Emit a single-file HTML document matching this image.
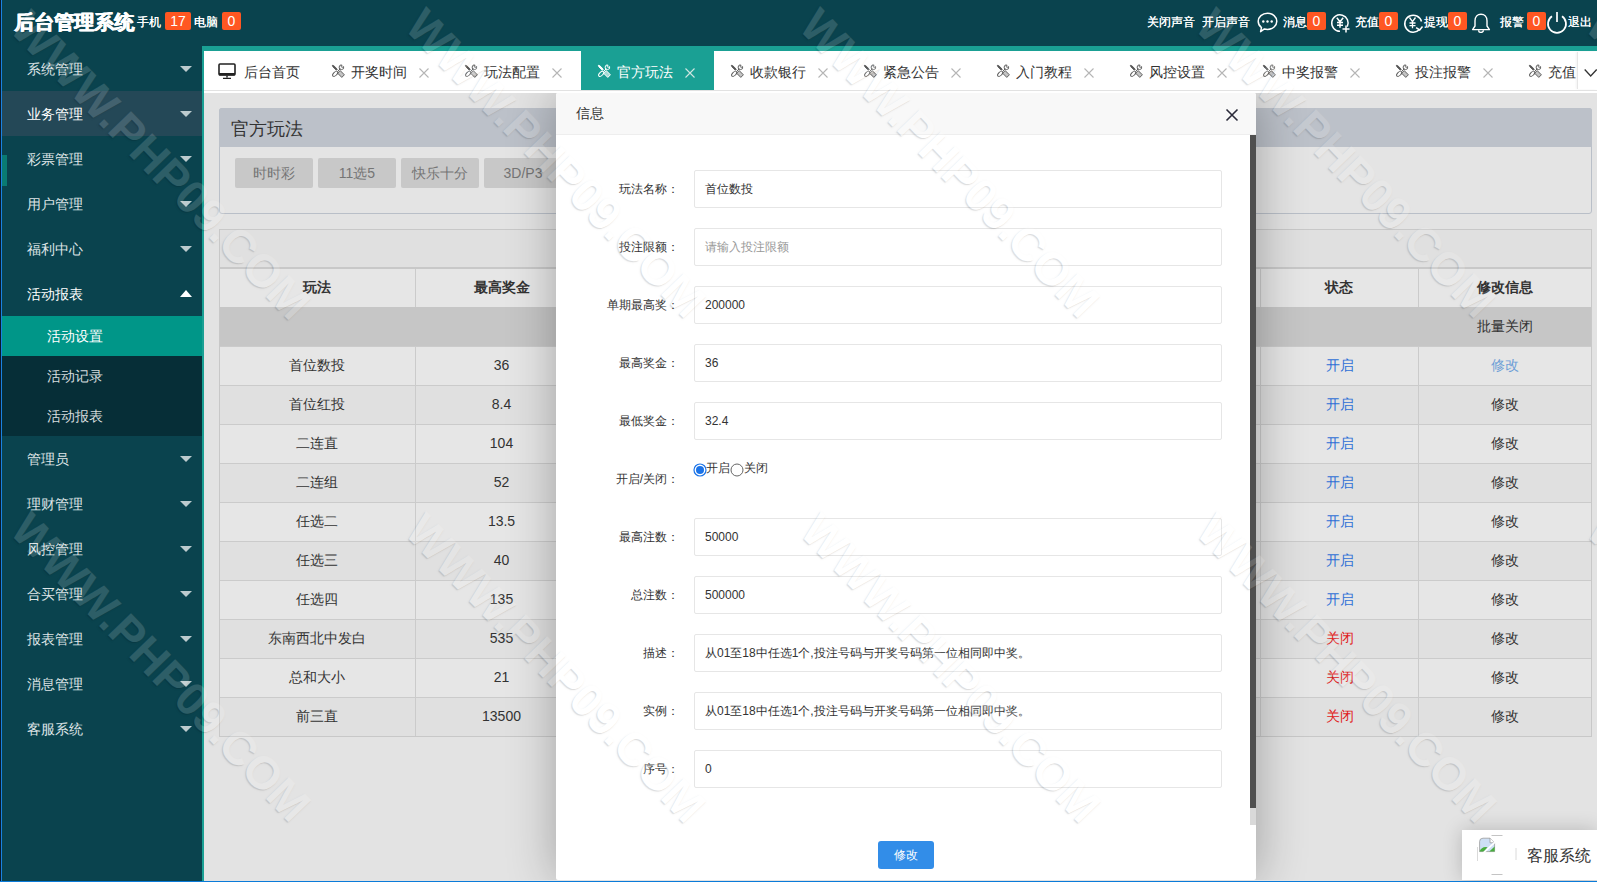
<!DOCTYPE html>
<html><head><meta charset="utf-8">
<style>
*{margin:0;padding:0;box-sizing:border-box}
html,body{width:1597px;height:882px;overflow:hidden}
body{position:relative;font-family:"Liberation Sans",sans-serif;font-size:14px;color:#333;background:#e3e3e3}
.a{position:absolute}
/* header */
#hd{left:0;top:0;width:1597px;height:46px;background:#0a434e}
#title{left:14px;top:9px;font-size:20px;font-weight:bold;text-shadow:0.6px 0 0 #fff,0 0.3px 0 #fff;color:#fff;line-height:26px;white-space:nowrap}
.ht{color:#fff;font-size:12px;line-height:16px;top:14px;white-space:nowrap;text-shadow:0.35px 0 0 #fff}
.bdg{background:#ff5722;color:#fff;height:18px;top:12px;border-radius:2px;font-size:14px;line-height:18px;text-align:center}
/* sidebar */
#sb{left:0;top:46px;width:202px;height:836px;background:#0a434e}
.mi{position:absolute;left:0;width:202px;height:45px;line-height:45px;padding-top:1px;padding-left:27px;color:#dfe5e7;font-size:14px}
.mi .tri{position:absolute;left:180px;top:20px;width:0;height:0;border-left:6px solid transparent;border-right:6px solid transparent;border-top:6px solid #bccbce}
.mi .triu{position:absolute;left:180px;top:19px;width:0;height:0;border-left:6px solid transparent;border-right:6px solid transparent;border-bottom:7px solid #fff}
.si{position:absolute;left:0;width:202px;height:40px;line-height:40px;padding-left:47px;color:#d5dcde;font-size:14px}
/* content */
#frame{left:202px;top:46px;width:1395px;height:836px;background:#1aa094}
#tabs{left:204px;top:51px;width:1393px;height:40px;background:#fff;border-bottom:1px solid #e2e2e2}
.tab{position:absolute;top:0;height:39px;line-height:39px;color:#333;font-size:14px;white-space:nowrap}
.tab.on{background:#1aa094;color:#fff}
.tab svg{position:absolute}
.tab .x{position:absolute;top:15px;width:11px;height:11px}
#content{left:204px;top:91px;width:1393px;height:791px;background:#e3e3e3;border-top:2px solid #fff}
.tc{height:39px;line-height:39px;text-align:center;color:#333;font-size:14px;white-space:nowrap}
.lab{left:556px;width:123px;height:38px;line-height:38px;text-align:right;font-size:12px;color:#333;white-space:nowrap}
.inp{left:694px;width:528px;height:38px;line-height:36px;border:1px solid #e6e6e6;border-radius:2px;padding-left:10px;font-size:12px;white-space:nowrap;overflow:hidden}
.wm{position:absolute;width:440px;height:56px;line-height:56px;text-align:center;font-size:46px;font-weight:bold;color:#fff;text-shadow:0 1.4px 1.2px #000;opacity:.14;transform:rotate(46deg);white-space:nowrap;pointer-events:none}
</style></head><body>
<div class="a" id="hd"></div>
<div class="a" id="title">后台管理系统</div>
<div class="a ht" style="left:137px">手机</div>
<div class="a bdg" style="left:165px;width:26px">17</div>
<div class="a ht" style="left:194px">电脑</div>
<div class="a bdg" style="left:222px;width:19px">0</div>


<div class="a ht" style="left:1147px">关闭声音</div>
<div class="a ht" style="left:1202px">开启声音</div>
<svg class="a" style="left:1256px;top:11px" width="23" height="23" viewBox="0 0 23 23"><path d="M11.5 2.2c5.2 0 9.3 3.6 9.3 8.1s-4.1 8.1-9.3 8.1c-1.1 0-2.1-.15-3.1-.45L4.6 20.6l.9-3.9C3.5 15.2 2.2 12.9 2.2 10.3c0-4.5 4.1-8.1 9.3-8.1z" fill="none" stroke="#fff" stroke-width="1.5" stroke-linejoin="round"/><circle cx="7.3" cy="10.5" r="1.2" fill="#fff"/><circle cx="11.5" cy="10.5" r="1.2" fill="#fff"/><circle cx="15.7" cy="10.5" r="1.2" fill="#fff"/></svg>
<div class="a ht" style="left:1283px">消息</div>
<div class="a bdg" style="left:1307px;width:19px">0</div>
<svg class="a" style="left:1330px;top:12px" width="22" height="22" viewBox="0 0 22 22"><path d="M17.3 14.6A8.2 8.2 0 1 0 10 19.2" fill="none" stroke="#fff" stroke-width="1.5"/><path d="M6.8 5.8l3.2 4 3.2-4M10 9.8v6M7 10.6h6M7 13.2h6" fill="none" stroke="#fff" stroke-width="1.5"/><path d="M16 13.5v7M12.5 17h7" stroke="#fff" stroke-width="1.5"/></svg>
<div class="a ht" style="left:1355px">充值</div>
<div class="a bdg" style="left:1379px;width:19px">0</div>
<svg class="a" style="left:1402px;top:12px" width="23" height="23" viewBox="0 0 23 23"><path d="M19.5 9.5A8.5 8.5 0 1 0 17.5 17.5" fill="none" stroke="#fff" stroke-width="1.5"/><path d="M20.5 14.5l-2.8 3.4-3.6-2.2" fill="none" stroke="#fff" stroke-width="1.5"/><path d="M7.5 5.5l3 4.2 3-4.2M10.5 9.7v6.5M7.5 11h6M7.5 13.6h6" fill="none" stroke="#fff" stroke-width="1.3"/></svg>
<div class="a ht" style="left:1424px">提现</div>
<div class="a bdg" style="left:1448px;width:19px">0</div>
<svg class="a" style="left:1471px;top:13px" width="20" height="20" viewBox="0 0 20 20"><path d="M10 1.2c3.5 0 6 2.8 6 6.6v5.2l2.4 3.6H1.6L4 13V7.8C4 4 6.5 1.2 10 1.2z" fill="none" stroke="#fff" stroke-width="1.4" stroke-linejoin="round"/><path d="M7.6 17.2a2.4 2.2 0 0 0 4.8 0" fill="none" stroke="#fff" stroke-width="1.4"/></svg>
<div class="a ht" style="left:1500px">报警</div>
<div class="a bdg" style="left:1527px;width:19px">0</div>
<svg class="a" style="left:1546px;top:11px" width="22" height="24" viewBox="0 0 22 24"><path d="M6 5.3A9 9 0 1 0 16 5.3" fill="none" stroke="#fff" stroke-width="1.7"/><path d="M11 1v10" stroke="#fff" stroke-width="1.7"/></svg>
<div class="a ht" style="left:1568px">退出</div>

<div class="a" id="sb"></div>
<div class="a" style="left:0;top:356px;width:202px;height:80px;background:#062e37"></div>
<div class="mi" style="top:46px">系统管理<i class="tri"></i></div>
<div class="mi" style="top:91px;background:#244857;color:#fff">业务管理<i class="tri"></i></div>
<div class="mi" style="top:136px">彩票管理<i class="tri"></i></div>
<div class="mi" style="top:181px">用户管理<i class="tri"></i></div>
<div class="mi" style="top:226px">福利中心<i class="tri"></i></div>
<div class="mi" style="top:271px;color:#fff">活动报表<i class="triu"></i></div>
<div class="si" style="top:316px;background:#009688;color:#fff">活动设置</div>
<div class="si" style="top:356px">活动记录</div>
<div class="si" style="top:396px">活动报表</div>
<div class="mi" style="top:436px">管理员<i class="tri"></i></div>
<div class="mi" style="top:481px">理财管理<i class="tri"></i></div>
<div class="mi" style="top:526px">风控管理<i class="tri"></i></div>
<div class="mi" style="top:571px">合买管理<i class="tri"></i></div>
<div class="mi" style="top:616px">报表管理<i class="tri"></i></div>
<div class="mi" style="top:661px">消息管理<i class="tri"></i></div>
<div class="mi" style="top:706px">客服系统<i class="tri"></i></div>
<div class="a" style="left:0;top:0;width:1px;height:882px;background:#0a1a2a"></div><div class="a" style="left:1px;top:0;width:1px;height:882px;background:#1a82e0"></div>
<div class="a" style="left:2px;top:155px;width:5px;height:31px;background:#0a7a72"></div>
<div class="a" id="frame"></div>
<div class="a" id="tabs"></div>
<div class="a" style="left:581px;top:51px;width:133px;height:39px;background:#1aa094"></div>
<svg class="a" style="left:218px;top:63px" width="18" height="17" viewBox="0 0 18 17"><rect x="1" y="1" width="16" height="11" rx="1" fill="none" stroke="#222" stroke-width="1.6"/><rect x="1" y="10" width="16" height="2.4" fill="#222"/><path d="M9 12.4v2.2M5 15.4h8" stroke="#222" stroke-width="1.4"/></svg>
<div class="a" style="left:244px;top:64px;font-size:14px;line-height:17px;color:#333;white-space:nowrap">后台首页</div>
<svg class="a" style="left:331px;top:64px" width="14" height="14" viewBox="0 0 14 14"><g fill="none" stroke="#5a5a5a" stroke-width="0.95"><path d="M1.3 1.3l1.6.5 3.4 3.4-1 1-3.4-3.4z" fill="#555"/><path d="M9.2 6.6l4.2 4.2-2.6 2.6-4.2-4.2z" fill="#555" fill-opacity="0.35"/><path d="M12.6 2.6a2.3 2.3 0 1 1-1.5-1.5l-1 1.4.9.9z"/><path d="M9.3 4.7L7 7"/><ellipse cx="4.2" cy="9.8" rx="3.2" ry="1.7" transform="rotate(-45 4.2 9.8)"/></g></svg>
<div class="a" style="left:351px;top:64px;font-size:14px;line-height:17px;color:#333;white-space:nowrap">开奖时间</div>
<svg class="a" style="left:419px;top:68px" width="10" height="10" viewBox="0 0 10 10"><path d="M0.5 0.5l9 9M9.5 0.5l-9 9" stroke="#b5b5b5" stroke-width="1.1"/></svg>
<svg class="a" style="left:464px;top:64px" width="14" height="14" viewBox="0 0 14 14"><g fill="none" stroke="#5a5a5a" stroke-width="0.95"><path d="M1.3 1.3l1.6.5 3.4 3.4-1 1-3.4-3.4z" fill="#555"/><path d="M9.2 6.6l4.2 4.2-2.6 2.6-4.2-4.2z" fill="#555" fill-opacity="0.35"/><path d="M12.6 2.6a2.3 2.3 0 1 1-1.5-1.5l-1 1.4.9.9z"/><path d="M9.3 4.7L7 7"/><ellipse cx="4.2" cy="9.8" rx="3.2" ry="1.7" transform="rotate(-45 4.2 9.8)"/></g></svg>
<div class="a" style="left:484px;top:64px;font-size:14px;line-height:17px;color:#333;white-space:nowrap">玩法配置</div>
<svg class="a" style="left:552px;top:68px" width="10" height="10" viewBox="0 0 10 10"><path d="M0.5 0.5l9 9M9.5 0.5l-9 9" stroke="#b5b5b5" stroke-width="1.1"/></svg>
<svg class="a" style="left:597px;top:64px" width="14" height="14" viewBox="0 0 14 14"><g fill="none" stroke="#fff" stroke-width="1"><path d="M1.3 1.3l1.6.5 3.4 3.4-1 1-3.4-3.4z" fill="#fff"/><path d="M9.2 6.6l4.2 4.2-2.6 2.6-4.2-4.2z" fill="#fff" fill-opacity="0.6"/><path d="M12.6 2.6a2.3 2.3 0 1 1-1.5-1.5l-1 1.4.9.9z"/><path d="M9.3 4.7L7 7"/><ellipse cx="4.2" cy="9.8" rx="3.2" ry="1.7" transform="rotate(-45 4.2 9.8)"/></g></svg>
<div class="a" style="left:617px;top:64px;font-size:14px;line-height:17px;color:#fff;white-space:nowrap">官方玩法</div>
<svg class="a" style="left:685px;top:68px" width="10" height="10" viewBox="0 0 10 10"><path d="M0.5 0.5l9 9M9.5 0.5l-9 9" stroke="#d0e6e2" stroke-width="1.1"/></svg>
<svg class="a" style="left:730px;top:64px" width="14" height="14" viewBox="0 0 14 14"><g fill="none" stroke="#5a5a5a" stroke-width="0.95"><path d="M1.3 1.3l1.6.5 3.4 3.4-1 1-3.4-3.4z" fill="#555"/><path d="M9.2 6.6l4.2 4.2-2.6 2.6-4.2-4.2z" fill="#555" fill-opacity="0.35"/><path d="M12.6 2.6a2.3 2.3 0 1 1-1.5-1.5l-1 1.4.9.9z"/><path d="M9.3 4.7L7 7"/><ellipse cx="4.2" cy="9.8" rx="3.2" ry="1.7" transform="rotate(-45 4.2 9.8)"/></g></svg>
<div class="a" style="left:750px;top:64px;font-size:14px;line-height:17px;color:#333;white-space:nowrap">收款银行</div>
<svg class="a" style="left:818px;top:68px" width="10" height="10" viewBox="0 0 10 10"><path d="M0.5 0.5l9 9M9.5 0.5l-9 9" stroke="#b5b5b5" stroke-width="1.1"/></svg>
<svg class="a" style="left:863px;top:64px" width="14" height="14" viewBox="0 0 14 14"><g fill="none" stroke="#5a5a5a" stroke-width="0.95"><path d="M1.3 1.3l1.6.5 3.4 3.4-1 1-3.4-3.4z" fill="#555"/><path d="M9.2 6.6l4.2 4.2-2.6 2.6-4.2-4.2z" fill="#555" fill-opacity="0.35"/><path d="M12.6 2.6a2.3 2.3 0 1 1-1.5-1.5l-1 1.4.9.9z"/><path d="M9.3 4.7L7 7"/><ellipse cx="4.2" cy="9.8" rx="3.2" ry="1.7" transform="rotate(-45 4.2 9.8)"/></g></svg>
<div class="a" style="left:883px;top:64px;font-size:14px;line-height:17px;color:#333;white-space:nowrap">紧急公告</div>
<svg class="a" style="left:951px;top:68px" width="10" height="10" viewBox="0 0 10 10"><path d="M0.5 0.5l9 9M9.5 0.5l-9 9" stroke="#b5b5b5" stroke-width="1.1"/></svg>
<svg class="a" style="left:996px;top:64px" width="14" height="14" viewBox="0 0 14 14"><g fill="none" stroke="#5a5a5a" stroke-width="0.95"><path d="M1.3 1.3l1.6.5 3.4 3.4-1 1-3.4-3.4z" fill="#555"/><path d="M9.2 6.6l4.2 4.2-2.6 2.6-4.2-4.2z" fill="#555" fill-opacity="0.35"/><path d="M12.6 2.6a2.3 2.3 0 1 1-1.5-1.5l-1 1.4.9.9z"/><path d="M9.3 4.7L7 7"/><ellipse cx="4.2" cy="9.8" rx="3.2" ry="1.7" transform="rotate(-45 4.2 9.8)"/></g></svg>
<div class="a" style="left:1016px;top:64px;font-size:14px;line-height:17px;color:#333;white-space:nowrap">入门教程</div>
<svg class="a" style="left:1084px;top:68px" width="10" height="10" viewBox="0 0 10 10"><path d="M0.5 0.5l9 9M9.5 0.5l-9 9" stroke="#b5b5b5" stroke-width="1.1"/></svg>
<svg class="a" style="left:1129px;top:64px" width="14" height="14" viewBox="0 0 14 14"><g fill="none" stroke="#5a5a5a" stroke-width="0.95"><path d="M1.3 1.3l1.6.5 3.4 3.4-1 1-3.4-3.4z" fill="#555"/><path d="M9.2 6.6l4.2 4.2-2.6 2.6-4.2-4.2z" fill="#555" fill-opacity="0.35"/><path d="M12.6 2.6a2.3 2.3 0 1 1-1.5-1.5l-1 1.4.9.9z"/><path d="M9.3 4.7L7 7"/><ellipse cx="4.2" cy="9.8" rx="3.2" ry="1.7" transform="rotate(-45 4.2 9.8)"/></g></svg>
<div class="a" style="left:1149px;top:64px;font-size:14px;line-height:17px;color:#333;white-space:nowrap">风控设置</div>
<svg class="a" style="left:1217px;top:68px" width="10" height="10" viewBox="0 0 10 10"><path d="M0.5 0.5l9 9M9.5 0.5l-9 9" stroke="#b5b5b5" stroke-width="1.1"/></svg>
<svg class="a" style="left:1262px;top:64px" width="14" height="14" viewBox="0 0 14 14"><g fill="none" stroke="#5a5a5a" stroke-width="0.95"><path d="M1.3 1.3l1.6.5 3.4 3.4-1 1-3.4-3.4z" fill="#555"/><path d="M9.2 6.6l4.2 4.2-2.6 2.6-4.2-4.2z" fill="#555" fill-opacity="0.35"/><path d="M12.6 2.6a2.3 2.3 0 1 1-1.5-1.5l-1 1.4.9.9z"/><path d="M9.3 4.7L7 7"/><ellipse cx="4.2" cy="9.8" rx="3.2" ry="1.7" transform="rotate(-45 4.2 9.8)"/></g></svg>
<div class="a" style="left:1282px;top:64px;font-size:14px;line-height:17px;color:#333;white-space:nowrap">中奖报警</div>
<svg class="a" style="left:1350px;top:68px" width="10" height="10" viewBox="0 0 10 10"><path d="M0.5 0.5l9 9M9.5 0.5l-9 9" stroke="#b5b5b5" stroke-width="1.1"/></svg>
<svg class="a" style="left:1395px;top:64px" width="14" height="14" viewBox="0 0 14 14"><g fill="none" stroke="#5a5a5a" stroke-width="0.95"><path d="M1.3 1.3l1.6.5 3.4 3.4-1 1-3.4-3.4z" fill="#555"/><path d="M9.2 6.6l4.2 4.2-2.6 2.6-4.2-4.2z" fill="#555" fill-opacity="0.35"/><path d="M12.6 2.6a2.3 2.3 0 1 1-1.5-1.5l-1 1.4.9.9z"/><path d="M9.3 4.7L7 7"/><ellipse cx="4.2" cy="9.8" rx="3.2" ry="1.7" transform="rotate(-45 4.2 9.8)"/></g></svg>
<div class="a" style="left:1415px;top:64px;font-size:14px;line-height:17px;color:#333;white-space:nowrap">投注报警</div>
<svg class="a" style="left:1483px;top:68px" width="10" height="10" viewBox="0 0 10 10"><path d="M0.5 0.5l9 9M9.5 0.5l-9 9" stroke="#b5b5b5" stroke-width="1.1"/></svg>
<svg class="a" style="left:1528px;top:64px" width="14" height="14" viewBox="0 0 14 14"><g fill="none" stroke="#5a5a5a" stroke-width="0.95"><path d="M1.3 1.3l1.6.5 3.4 3.4-1 1-3.4-3.4z" fill="#555"/><path d="M9.2 6.6l4.2 4.2-2.6 2.6-4.2-4.2z" fill="#555" fill-opacity="0.35"/><path d="M12.6 2.6a2.3 2.3 0 1 1-1.5-1.5l-1 1.4.9.9z"/><path d="M9.3 4.7L7 7"/><ellipse cx="4.2" cy="9.8" rx="3.2" ry="1.7" transform="rotate(-45 4.2 9.8)"/></g></svg>
<div class="a" style="left:1548px;top:64px;font-size:14px;line-height:17px;color:#333;white-space:nowrap">充值</div>
<div class="a" style="left:1577px;top:52px;width:20px;height:37px;background:#fff;border-left:1px solid #e6e6e6;box-shadow:-1px 0 2px rgba(0,0,0,.05)"></div>
<svg class="a" style="left:1584px;top:68px" width="13" height="10" viewBox="0 0 13 10"><path d="M0.7 1.5l6 6.5 6-6.5" fill="none" stroke="#333" stroke-width="1.3"/></svg>
<div class="a" id="content"></div>
<div class="a" style="left:219px;top:108px;width:1373px;height:106px;border:1px solid #b9bfc8;border-radius:3px;background:#e4e4e4"></div>
<div class="a" style="left:219px;top:108px;width:1373px;height:39px;background:#bcc1c9;border-radius:3px 3px 0 0"></div>
<div class="a" style="left:231px;top:118px;font-size:18px;line-height:22px;color:#333;white-space:nowrap">官方玩法</div>
<div class="a" style="left:235px;top:158px;width:78px;height:30px;line-height:30px;background:#c8c8c8;border-radius:2px;text-align:center;color:#757575;font-size:14px">时时彩</div>
<div class="a" style="left:318px;top:158px;width:78px;height:30px;line-height:30px;background:#c8c8c8;border-radius:2px;text-align:center;color:#757575;font-size:14px">11选5</div>
<div class="a" style="left:401px;top:158px;width:78px;height:30px;line-height:30px;background:#c8c8c8;border-radius:2px;text-align:center;color:#757575;font-size:14px">快乐十分</div>
<div class="a" style="left:484px;top:158px;width:78px;height:30px;line-height:30px;background:#c8c8c8;border-radius:2px;text-align:center;color:#757575;font-size:14px">3D/P3</div>
<div class="a" style="left:219px;top:229px;width:1373px;height:508px;border:1px solid #c8c8c8;background:#e6e6e6"></div>
<div class="a" style="left:220px;top:230px;width:1371px;height:38px;background:#e0e0e0;border-bottom:1px solid #c8c8c8"></div>
<div class="a" style="left:220px;top:307px;width:1371px;height:39px;background:#c6c6c6"></div>
<div class="a" style="left:1418px;top:307px;width:173px;height:39px;line-height:39px;text-align:center;color:#333;font-size:14px">批量关闭</div>
<div class="a" style="left:219px;top:268px;width:196px;height:39px;line-height:39px;text-align:center;font-weight:bold;color:#333;font-size:14px">玩法</div>
<div class="a" style="left:415px;top:268px;width:173px;height:39px;line-height:39px;text-align:center;font-weight:bold;color:#333;font-size:14px">最高奖金</div>
<div class="a" style="left:1260px;top:268px;width:158px;height:39px;line-height:39px;text-align:center;font-weight:bold;color:#333;font-size:14px">状态</div>
<div class="a" style="left:1418px;top:268px;width:174px;height:39px;line-height:39px;text-align:center;font-weight:bold;color:#333;font-size:14px">修改信息</div>
<div class="a" style="left:220px;top:346px;width:1371px;height:39px;background:#e6e6e6;border-top:1px solid #cbcbcb"></div>
<div class="a tc" style="left:219px;top:346px;width:196px">首位数投</div>
<div class="a tc" style="left:415px;top:346px;width:173px">36</div>
<div class="a tc" style="left:1261px;top:346px;width:158px;color:#2f6fd6">开启</div>
<div class="a tc" style="left:1418px;top:346px;width:173px;color:#6d9ed6">修改</div>
<div class="a" style="left:220px;top:385px;width:1371px;height:39px;background:#e0e0e0;border-top:1px solid #cbcbcb"></div>
<div class="a tc" style="left:219px;top:385px;width:196px">首位红投</div>
<div class="a tc" style="left:415px;top:385px;width:173px">8.4</div>
<div class="a tc" style="left:1261px;top:385px;width:158px;color:#2f6fd6">开启</div>
<div class="a tc" style="left:1418px;top:385px;width:173px;color:#333">修改</div>
<div class="a" style="left:220px;top:424px;width:1371px;height:39px;background:#e6e6e6;border-top:1px solid #cbcbcb"></div>
<div class="a tc" style="left:219px;top:424px;width:196px">二连直</div>
<div class="a tc" style="left:415px;top:424px;width:173px">104</div>
<div class="a tc" style="left:1261px;top:424px;width:158px;color:#2f6fd6">开启</div>
<div class="a tc" style="left:1418px;top:424px;width:173px;color:#333">修改</div>
<div class="a" style="left:220px;top:463px;width:1371px;height:39px;background:#e0e0e0;border-top:1px solid #cbcbcb"></div>
<div class="a tc" style="left:219px;top:463px;width:196px">二连组</div>
<div class="a tc" style="left:415px;top:463px;width:173px">52</div>
<div class="a tc" style="left:1261px;top:463px;width:158px;color:#2f6fd6">开启</div>
<div class="a tc" style="left:1418px;top:463px;width:173px;color:#333">修改</div>
<div class="a" style="left:220px;top:502px;width:1371px;height:39px;background:#e6e6e6;border-top:1px solid #cbcbcb"></div>
<div class="a tc" style="left:219px;top:502px;width:196px">任选二</div>
<div class="a tc" style="left:415px;top:502px;width:173px">13.5</div>
<div class="a tc" style="left:1261px;top:502px;width:158px;color:#2f6fd6">开启</div>
<div class="a tc" style="left:1418px;top:502px;width:173px;color:#333">修改</div>
<div class="a" style="left:220px;top:541px;width:1371px;height:39px;background:#e0e0e0;border-top:1px solid #cbcbcb"></div>
<div class="a tc" style="left:219px;top:541px;width:196px">任选三</div>
<div class="a tc" style="left:415px;top:541px;width:173px">40</div>
<div class="a tc" style="left:1261px;top:541px;width:158px;color:#2f6fd6">开启</div>
<div class="a tc" style="left:1418px;top:541px;width:173px;color:#333">修改</div>
<div class="a" style="left:220px;top:580px;width:1371px;height:39px;background:#e6e6e6;border-top:1px solid #cbcbcb"></div>
<div class="a tc" style="left:219px;top:580px;width:196px">任选四</div>
<div class="a tc" style="left:415px;top:580px;width:173px">135</div>
<div class="a tc" style="left:1261px;top:580px;width:158px;color:#2f6fd6">开启</div>
<div class="a tc" style="left:1418px;top:580px;width:173px;color:#333">修改</div>
<div class="a" style="left:220px;top:619px;width:1371px;height:39px;background:#e0e0e0;border-top:1px solid #cbcbcb"></div>
<div class="a tc" style="left:219px;top:619px;width:196px">东南西北中发白</div>
<div class="a tc" style="left:415px;top:619px;width:173px">535</div>
<div class="a tc" style="left:1261px;top:619px;width:158px;color:#e02020">关闭</div>
<div class="a tc" style="left:1418px;top:619px;width:173px;color:#333">修改</div>
<div class="a" style="left:220px;top:658px;width:1371px;height:39px;background:#e6e6e6;border-top:1px solid #cbcbcb"></div>
<div class="a tc" style="left:219px;top:658px;width:196px">总和大小</div>
<div class="a tc" style="left:415px;top:658px;width:173px">21</div>
<div class="a tc" style="left:1261px;top:658px;width:158px;color:#e02020">关闭</div>
<div class="a tc" style="left:1418px;top:658px;width:173px;color:#333">修改</div>
<div class="a" style="left:220px;top:697px;width:1371px;height:39px;background:#e0e0e0;border-top:1px solid #cbcbcb"></div>
<div class="a tc" style="left:219px;top:697px;width:196px">前三直</div>
<div class="a tc" style="left:415px;top:697px;width:173px">13500</div>
<div class="a tc" style="left:1261px;top:697px;width:158px;color:#e02020">关闭</div>
<div class="a tc" style="left:1418px;top:697px;width:173px;color:#333">修改</div>
<div class="a" style="left:415px;top:268px;width:1px;height:39px;background:#cbcbcb"></div>
<div class="a" style="left:415px;top:346px;width:1px;height:390px;background:#cbcbcb"></div>
<div class="a" style="left:1260px;top:268px;width:1px;height:39px;background:#cbcbcb"></div>
<div class="a" style="left:1260px;top:346px;width:1px;height:390px;background:#cbcbcb"></div>
<div class="a" style="left:1418px;top:268px;width:1px;height:39px;background:#cbcbcb"></div>
<div class="a" style="left:1418px;top:346px;width:1px;height:390px;background:#cbcbcb"></div>
<div class="a" style="left:220px;top:268px;width:1371px;height:1px;background:#c8c8c8"></div>
<div class="a" style="left:220px;top:736px;width:1371px;height:1px;background:#c8c8c8"></div>
<!--MODAL--><div class="a" style="left:204px;top:93px;width:1393px;height:787px;overflow:hidden"><div class="a" style="left:-204px;top:-93px;width:1597px;height:882px">
<div class="a" style="left:556px;top:93px;width:700px;height:787px;background:#fff;box-shadow:1px 1px 50px rgba(0,0,0,.3);border-radius:2px"></div>
<div class="a" style="left:556px;top:93px;width:700px;height:42px;background:#f8f8f8;border-bottom:1px solid #eee;border-radius:2px 2px 0 0"></div>
<div class="a" style="left:576px;top:105px;font-size:14px;line-height:17px;color:#333">信息</div>
<svg class="a" style="left:1225px;top:108px" width="14" height="14" viewBox="0 0 14 14"><path d="M1.5 1.5l11 11M12.5 1.5l-11 11" stroke="#2b2b3a" stroke-width="1.6"/></svg>
<div class="a" style="left:1250px;top:135px;width:6px;height:673px;background:#4f4f4f"></div>
<div class="a" style="left:1250px;top:808px;width:6px;height:17px;background:#d9d9d9"></div>
<div class="a lab" style="top:170px">玩法名称：</div>
<div class="a inp" style="top:170px;color:#333">首位数投</div>
<div class="a lab" style="top:228px">投注限额：</div>
<div class="a inp" style="top:228px;color:#999">请输入投注限额</div>
<div class="a lab" style="top:286px">单期最高奖：</div>
<div class="a inp" style="top:286px;color:#333">200000</div>
<div class="a lab" style="top:344px">最高奖金：</div>
<div class="a inp" style="top:344px;color:#333">36</div>
<div class="a lab" style="top:402px">最低奖金：</div>
<div class="a inp" style="top:402px;color:#333">32.4</div>
<div class="a lab" style="top:518px">最高注数：</div>
<div class="a inp" style="top:518px;color:#333">50000</div>
<div class="a lab" style="top:576px">总注数：</div>
<div class="a inp" style="top:576px;color:#333">500000</div>
<div class="a lab" style="top:634px">描述：</div>
<div class="a inp" style="top:634px;color:#333">从01至18中任选1个,投注号码与开奖号码第一位相同即中奖。</div>
<div class="a lab" style="top:692px">实例：</div>
<div class="a inp" style="top:692px;color:#333">从01至18中任选1个,投注号码与开奖号码第一位相同即中奖。</div>
<div class="a lab" style="top:750px">序号：</div>
<div class="a inp" style="top:750px;color:#333">0</div>
<div class="a lab" style="top:460px">开启/关闭：</div>
<svg class="a" style="left:693px;top:463px" width="14" height="14" viewBox="0 0 14 14"><circle cx="7" cy="7" r="6" fill="#fff" stroke="#1a73e8" stroke-width="1.2"/><circle cx="7" cy="7" r="4" fill="#1a73e8"/></svg>
<div class="a" style="left:706px;top:461px;font-size:12px;line-height:14px;color:#333">开启</div>
<svg class="a" style="left:730px;top:463px" width="14" height="14" viewBox="0 0 14 14"><circle cx="7" cy="7" r="6" fill="#fff" stroke="#666" stroke-width="1"/></svg>
<div class="a" style="left:744px;top:461px;font-size:12px;line-height:14px;color:#333">关闭</div>
<div class="a" style="left:878px;top:841px;width:56px;height:28px;line-height:28px;background:#328de8;border-radius:3px;color:#fff;font-size:12px;text-align:center">修改</div>
</div></div>
<div class="a" style="left:1462px;top:830px;width:135px;height:50px;background:#fff;box-shadow:0 0 20px rgba(0,0,0,.2)"></div>
<svg class="a" style="left:1474px;top:833px" width="48" height="46" viewBox="0 0 48 46"><path d="M17.5 2.5h11M17.5 41.5h11" stroke="#c4c4c4" stroke-width="1"/><path d="M3.5 14v14M42 15v12" stroke="#dadada" stroke-width="1"/></svg>
<svg class="a" style="left:1479px;top:837px" width="17" height="17" viewBox="0 0 17 17"><path d="M0.6 4.5Q0.6 1.2 4 1.2H11l4.6 4.6V14.6H0.6z" fill="#cddff5" stroke="#9a9a9a" stroke-width="0.8"/><path d="M11 1.2V5.8h4.6" fill="#fff" stroke="#9a9a9a" stroke-width="0.8"/><path d="M0.6 14.6Q2.5 9.2 8.5 10.2L5 14.6z" fill="#4aad3f"/><path d="M15.6 9.5L10.3 14.6h5.3z" fill="#4aad3f"/><path d="M4.2 16.2L16 5.2" stroke="#fff" stroke-width="1.7"/></svg>
<div class="a" style="left:1527px;top:846px;font-size:16px;line-height:20px;color:#333;white-space:nowrap">客服系统</div>
<div class="a" style="left:0;top:881px;width:1597px;height:1px;background:#0a7bd9"></div>
<!--WM-->
<div class="wm" style="left:-59px;top:137px">WWW.PHP09.COM</div>
<div class="wm" style="left:336px;top:135px">WWW.PHP09.COM</div>
<div class="wm" style="left:730px;top:135px">WWW.PHP09.COM</div>
<div class="wm" style="left:1126px;top:135px">WWW.PHP09.COM</div>
<div class="wm" style="left:-59px;top:639px">WWW.PHP09.COM</div>
<div class="wm" style="left:336px;top:640px">WWW.PHP09.COM</div>
<div class="wm" style="left:731px;top:640px">WWW.PHP09.COM</div>
<div class="wm" style="left:1127px;top:640px">WWW.PHP09.COM</div>

<div class="wm" style="left:1516px;top:135px">WWW.PHP09.COM</div>
<div class="wm" style="left:1517px;top:640px">WWW.PHP09.COM</div>
</body></html>
